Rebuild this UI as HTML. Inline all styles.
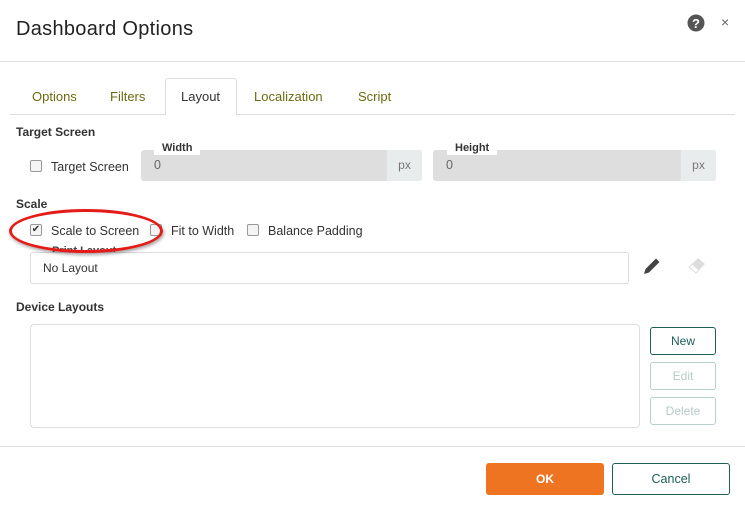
<!DOCTYPE html>
<html><head><style>
*{box-sizing:border-box;margin:0;padding:0}
body{width:745px;height:511px;background:#fff;font-family:"Liberation Sans",sans-serif;position:relative;overflow:hidden;color:#333}
.a{position:absolute}
.t{font-size:12.5px;color:#333;white-space:nowrap}
.b{font-weight:bold;font-size:12px;color:#333}
.tab{position:absolute;top:89px;font-size:13px;color:#6b6a12}
.cb{position:absolute;width:12px;height:12px;border:1px solid #999;border-radius:2px;background:#f4f4f4}
.inp{position:absolute;height:31px;background:#dedede;border-radius:3px}
.px{position:absolute;right:0;top:0;width:36px;height:31px;background:#e8ecec;border-radius:0 3px 3px 0;font-size:12px;color:#777;text-align:center;line-height:31px;border-left:1px solid #e0e0e0}
.lbl{position:absolute;top:-8px;background:#fff;padding:0 8px;font-size:11px;font-weight:bold;border-radius:5px 5px 0 0;line-height:13px}
.btn{position:absolute;border:1px solid #1e5e57;border-radius:3px;font-size:12px;color:#1e5e57;text-align:center}
.dis{border-color:#b8d0cd;color:#b9cac8}
</style></head><body>
<div class="a" style="left:16px;top:18px;font-size:20px;color:#222;letter-spacing:0.3px">Dashboard Options</div>
<svg class="a" style="left:687px;top:14px" width="18" height="18" viewBox="0 0 18 18"><circle cx="9" cy="9" r="8.5" fill="#555"/><text x="9" y="14" font-size="13" font-weight="bold" fill="#fff" text-anchor="middle" font-family="Liberation Sans">?</text></svg>
<div class="a" style="left:721px;top:14px;font-size:14px;color:#666">×</div>
<div class="a" style="left:0;top:61px;width:745px;height:1px;background:#ddd"></div>

<div class="a" style="left:10px;top:114px;width:725px;height:1px;background:#ddd"></div>
<div class="a" style="left:165px;top:78px;width:72px;height:37px;border:1px solid #ddd;border-bottom:none;background:#fff;border-radius:3px 3px 0 0"></div>
<div class="tab" style="left:32px">Options</div>
<div class="tab" style="left:110px">Filters</div>
<div class="tab" style="left:181px;color:#333">Layout</div>
<div class="tab" style="left:254px">Localization</div>
<div class="tab" style="left:358px">Script</div>

<div class="a b" style="left:16px;top:125px">Target Screen</div>
<div class="cb" style="left:30px;top:160px"></div>
<div class="a t" style="left:51px;top:160px">Target Screen</div>
<div class="inp" style="left:141px;top:150px;width:281px"><div class="lbl" style="left:13px">Width</div><div class="a t" style="left:13px;top:8px;color:#666">0</div><div class="px">px</div></div>
<div class="inp" style="left:433px;top:150px;width:283px"><div class="lbl" style="left:14px">Height</div><div class="a t" style="left:13px;top:8px;color:#666">0</div><div class="px">px</div></div>

<div class="a b" style="left:16px;top:197px">Scale</div>
<div class="cb" style="left:30px;top:224px;font-size:10px;line-height:10px;text-align:center;color:#333">✔</div>
<div class="a t" style="left:51px;top:224px">Scale to Screen</div>
<div class="cb" style="left:150px;top:224px"></div>
<div class="a t" style="left:171px;top:224px">Fit to Width</div>
<div class="cb" style="left:247px;top:224px"></div>
<div class="a t" style="left:268px;top:224px">Balance Padding</div>

<div class="a" style="left:30px;top:252px;width:599px;height:32px;border:1px solid #ddd;border-radius:3px"></div>
<div class="a" style="left:52px;top:245px;font-size:11px;font-weight:bold;color:#444;background:#fff;height:7px;overflow:hidden;line-height:13px">Print Layout</div>
<div class="a t" style="left:43px;top:261px;font-size:12px">No Layout</div>
<svg class="a" style="left:643px;top:257px" width="18" height="18" viewBox="0 0 18 18"><path d="M1 17 L2.5 12 L13 1.5 L16.5 5 L6 15.5 Z" fill="#444"/></svg>
<svg class="a" style="left:688px;top:257px" width="18" height="18" viewBox="0 0 18 18"><path d="M10 1 L17 7 L11 13 L4 7 Z" fill="#ddd"/><path d="M4 7 L11 13 L8 16 L1 10 Z" fill="#fff" stroke="#ddd"/></svg>

<div class="a" style="left:9px;top:209px;width:154px;height:44px;border:3px solid #e41b17;border-radius:50%;box-shadow:1px 2px 3px rgba(0,0,0,.35)"></div>

<div class="a b" style="left:16px;top:300px">Device Layouts</div>
<div class="a" style="left:30px;top:324px;width:610px;height:104px;border:1px solid #ddd;border-radius:4px"></div>
<div class="btn" style="left:650px;top:327px;width:66px;height:28px;line-height:26px">New</div>
<div class="btn dis" style="left:650px;top:362px;width:66px;height:28px;line-height:26px">Edit</div>
<div class="btn dis" style="left:650px;top:397px;width:66px;height:28px;line-height:26px">Delete</div>

<div class="a" style="left:0;top:446px;width:745px;height:1px;background:#ddd"></div>
<div class="a" style="left:486px;top:463px;width:118px;height:32px;background:#ee7421;border-radius:3px;color:#fff;font-weight:bold;font-size:12px;text-align:center;line-height:32px">OK</div>
<div class="btn" style="left:612px;top:463px;width:118px;height:32px;line-height:30px;font-size:12.5px">Cancel</div>
</body></html>
